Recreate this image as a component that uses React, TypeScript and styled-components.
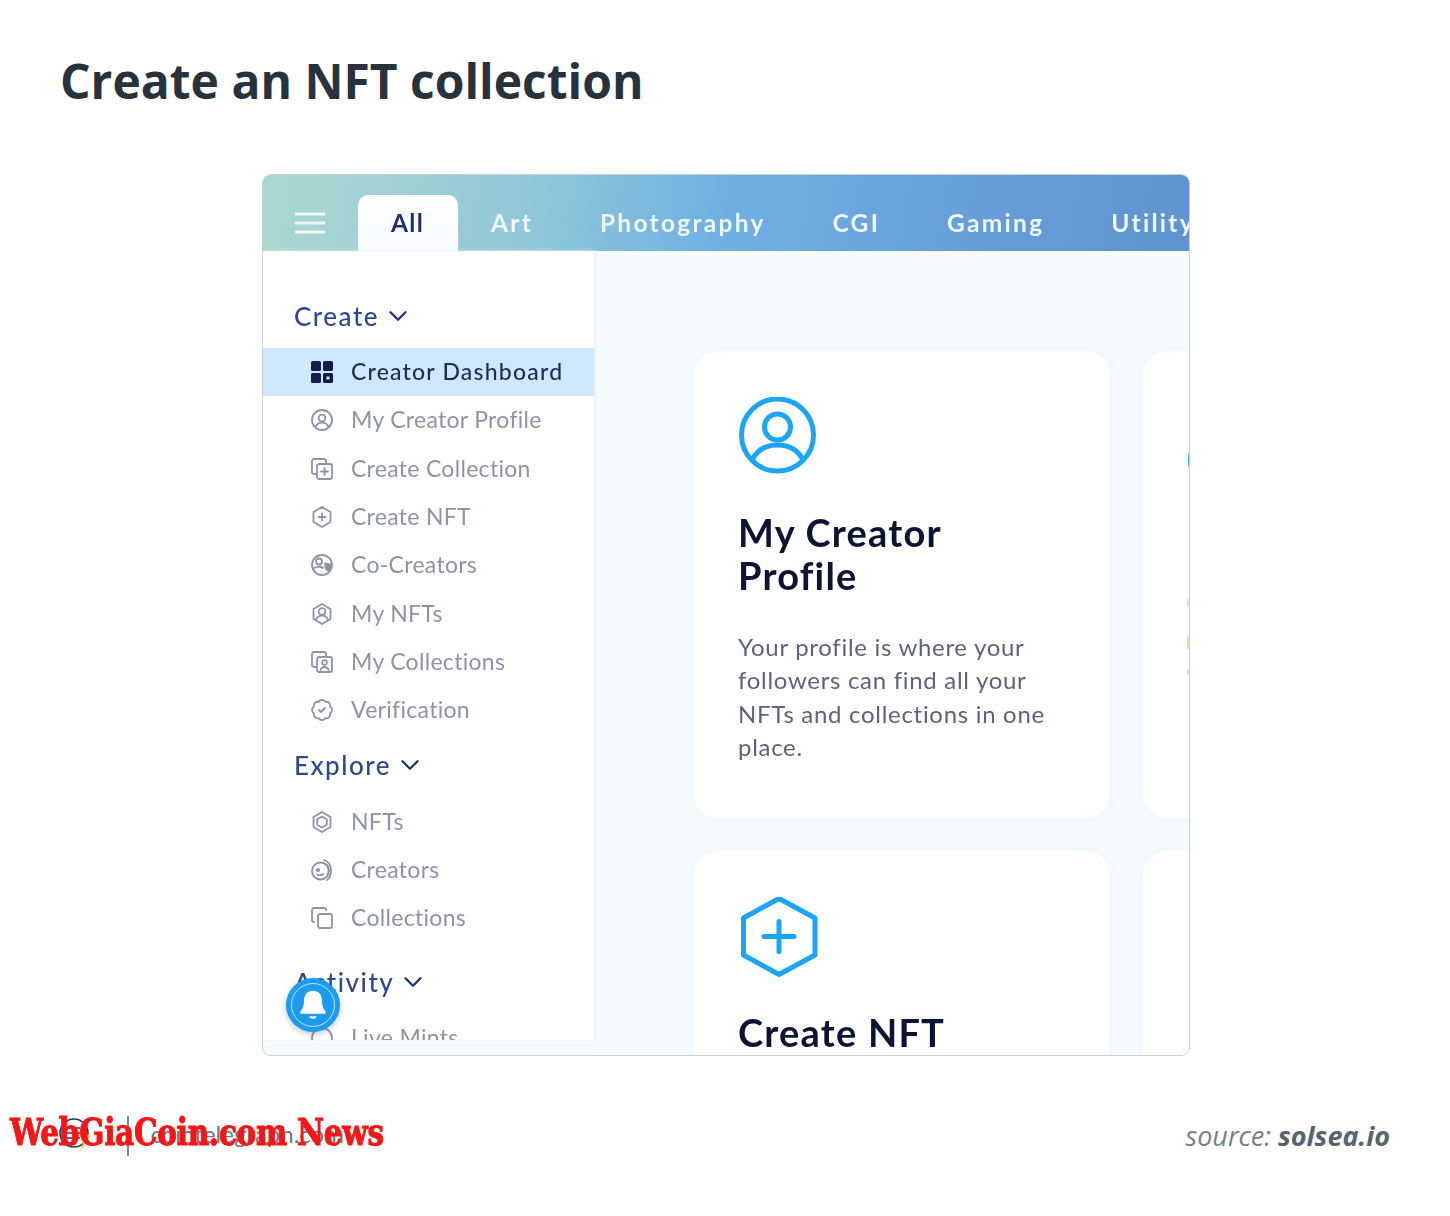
import React from 'react';
import styled, { createGlobalStyle } from 'styled-components';
import { BadgeCheck, ChevronDown, Copy } from 'lucide-react';

const GlobalStyle = createGlobalStyle`
  html, body { margin: 0; padding: 0; background: #fff; }
  * { box-sizing: border-box; }
`;

const Page = styled.div`
  position: relative;
  width: 1450px;
  height: 1216px;
  background: #fff;
  font-family: "Lato", "Open Sans", sans-serif;
  overflow: hidden;
`;

const Title = styled.h1`
  margin: 0;
  padding: 49px 0 0 60px;
  height: 174px;
  font-family: "Open Sans", sans-serif;
  font-size: 48px;
  line-height: 64px;
  font-weight: 700;
  color: #27323d;
`;

const Frame = styled.div`
  width: 928px;
  height: 882px;
  margin-left: 262px;
  border: 1.5px solid #cbcfd2;
  border-radius: 9px;
  overflow: hidden;
  position: relative;
  display: flex;
  flex-direction: column;
  background: #f6fbff;
`;

const Blur = styled.div`
  filter: blur(0.6px);
  display: flex;
  flex-direction: column;
  height: 100%;
`;

const TopBar = styled.div`
  height: 76px;
  flex: none;
  display: flex;
  align-items: flex-end;
  padding-left: 31.5px;
  background: linear-gradient(100deg, #abd8d0 0%, #93c8d8 28%, #6fb0e2 50%, #679fda 75%, #5f93d0 100%);
  white-space: nowrap;
`;

const Burger = styled.svg`
  width: 30px;
  height: 22px;
  margin: 0 33px 17px 0;
  flex: none;
`;

const Tab = styled.div<{ $active?: boolean }>`
  height: 56px;
  flex: none;
  padding: 0 ${({ $active }) => ($active ? 33.5 : 33.4)}px;
  display: flex;
  align-items: center;
  padding-bottom: 2px;
  font-size: 24.5px;
  font-weight: 700;
  letter-spacing: ${({ $active }) => ($active ? 1.3 : 2.3)}px;
  color: ${({ $active }) => ($active ? '#1f2f73' : '#eef7fb')};
  border-radius: 10px 10px 0 0;
  background: ${({ $active }) => ($active ? 'linear-gradient(#fff, #f6fbff)' : 'transparent')};
`;

const Body = styled.div`
  flex: 1;
  display: flex;
  min-height: 0;
`;

const Sidebar = styled.aside`
  width: 331px;
  flex: none;
  background: #fff;
  height: 789px;
  overflow: hidden;
  padding-top: 48px;
  box-shadow: 2px 0 3px #e8f1f9;
`;

const GroupHead = styled.div<{ $gap?: number }>`
  display: flex;
  align-items: center;
  gap: 4px;
  height: 34px;
  padding-left: 31px;
  margin-top: ${({ $gap }) => $gap ?? 0}px;
  margin-bottom: 15px;
  font-size: 26px;
  font-weight: 500;
  letter-spacing: 1.5px;
  color: #30488f;
  svg { color: #22346f; }
`;

const NavItem = styled.div<{ $active?: boolean }>`
  height: 48.3px;
  display: flex;
  align-items: center;
  gap: 17px;
  padding-left: 47px;
  font-size: 23px;
  letter-spacing: ${({ $active }) => ($active ? 1.2 : 0.3)}px;
  font-weight: ${({ $active }) => ($active ? 500 : 400)};
  color: ${({ $active }) => ($active ? '#1d2c55' : '#8e93a6')};
  background: ${({ $active }) => ($active ? '#cfe8fd' : 'transparent')};
  svg { flex: none; width: 24px; height: 24px; }
`;

const NavLabel = styled.span`
  margin-bottom: 2px;
`;

const Main = styled.main`
  flex: 1;
  min-width: 0;
  overflow: hidden;
  display: grid;
  grid-template-columns: 416px 416px;
  grid-auto-rows: 467px;
  gap: 33px;
  padding: 100px 0 0 100px;
`;

const Card = styled.section`
  position: relative;
  width: 416px;
  height: 467px;
  padding: 46px 44px 0;
  background: #fff;
  border-radius: 24px;
  box-shadow: 0 0 10px #eef6fd;
`;

const CardIcon = styled.svg<{ $drop?: number }>`
  display: block;
  width: 80px;
  height: 80px;
  margin-top: ${({ $drop }) => $drop ?? 0}px;
  color: #1ca4f5;
`;

const CardTitle = styled.h2`
  margin: 34px 0 0;
  width: 300px;
  font-size: 38px;
  line-height: 43px;
  font-weight: 700;
  letter-spacing: 1.2px;
  color: #0c1434;
`;

const CardText = styled.p`
  margin: 33px 0 0;
  font-size: 24px;
  line-height: 33.4px;
  letter-spacing: 0.7px;
  color: #5d6479;
`;

const TanDot = styled.span<{ $top: number; $h: number }>`
  position: absolute;
  left: 44px;
  top: ${({ $top }) => $top}px;
  width: 3px;
  height: ${({ $h }) => $h}px;
  border-radius: 2px;
  background: #ecdcb8;
`;

const BellButton = styled.div`
  position: absolute;
  left: 23px;
  top: 803px;
  width: 54px;
  height: 54px;
  border-radius: 50%;
  background: #1b9cf0;
  box-shadow: 0 2px 6px rgba(60, 90, 120, 0.35);
  display: flex;
  align-items: center;
  justify-content: center;
  &::after {
    content: "";
    position: absolute;
    inset: 5px;
    border: 1.5px solid #bfe4fb;
    border-radius: 50%;
  }
  svg { width: 36px; height: 36px; }
`;

const BottomFade = styled.div`
  position: absolute;
  left: 0;
  bottom: 0;
  width: 331px;
  height: 14px;
  background: #f6f9fd;
`;

const Footer = styled.footer`
  display: flex;
  align-items: center;
  justify-content: space-between;
  height: 40px;
  margin-top: 60px;
  padding: 0 60px 0 58px;
`;

const Brand = styled.div`
  display: flex;
  align-items: center;
  height: 40px;
  font-size: 24px;
  color: #6c7a86;
`;

const BrandIcon = styled.svg`
  width: 36px;
  height: 40px;
  flex: none;
`;

const Divider = styled.span`
  width: 1.5px;
  height: 40px;
  margin: 0 22px 0 33px;
  background: #7c8790;
`;

const BrandName = styled.span`
  margin-bottom: 6px;
`;

const Source = styled.div`
  font-family: "Open Sans", sans-serif;
  font-style: italic;
  font-size: 27px;
  color: #76808a;
  margin-bottom: 2px;
  b { font-weight: 700; color: #566470; }
`;

const Watermark = styled.div`
  position: absolute;
  left: 10px;
  top: 1109px;
  font-family: "DejaVu Serif Condensed", "DejaVu Serif", serif;
  font-size: 38px;
  line-height: 46px;
  font-weight: 900;
  color: #f71616;
  letter-spacing: -0.3px;
  white-space: nowrap;
  transform: scaleX(0.864);
  transform-origin: left center;
  -webkit-text-stroke: 1px #f71616;
`;

const Ico = ({ children }: { children: React.ReactNode }) => (
  <svg viewBox="0 0 24 24" fill="none" stroke="#8e93a6" strokeWidth="1.8" strokeLinecap="round" strokeLinejoin="round">
    {children}
  </svg>
);

const hex = 'M12 2 L20.500 7 V17 L12 22 L3.500 17 V7 Z';

const navCreate: { label: string; icon: React.ReactNode }[] = [
  {
    label: 'My Creator Profile',
    icon: (
      <Ico>
        <circle cx="12" cy="12" r="10" />
        <circle cx="12" cy="10" r="3.400" />
        <path d="M5.500 18.500c1.500-2.600 3.800-3.800 6.500-3.800s5 1.200 6.500 3.800" />
      </Ico>
    ),
  },
  {
    label: 'Create Collection',
    icon: (
      <Ico>
        <path d="M6 17H4a2 2 0 0 1-2-2V4a2 2 0 0 1 2-2h10a2 2 0 0 1 2 2v2" />
        <rect x="7" y="7" width="15" height="15" rx="2" />
        <path d="M14.500 11v7M11 14.500h7" />
      </Ico>
    ),
  },
  {
    label: 'Create NFT',
    icon: (
      <Ico>
        <path d={hex} />
        <path d="M12 8.500v7M8.500 12h7" />
      </Ico>
    ),
  },
  {
    label: 'Co-Creators',
    icon: (
      <Ico>
        <circle cx="12" cy="12" r="10" />
        <circle cx="9" cy="8.500" r="3" />
        <path d="M3 16c2-2.500 7-3 10-1" />
        <path d="M15 10.500l6.500 1.500-3 6-2.500-2z" fill="#8e93a6" />
      </Ico>
    ),
  },
  {
    label: 'My NFTs',
    icon: (
      <Ico>
        <path d={hex} />
        <circle cx="12" cy="9.500" r="3.400" />
        <path d="M6 18c1-3 3.200-4.300 6-4.300s5 1.300 6 4.300" />
      </Ico>
    ),
  },
  {
    label: 'My Collections',
    icon: (
      <Ico>
        <path d="M6 17H4a2 2 0 0 1-2-2V4a2 2 0 0 1 2-2h10a2 2 0 0 1 2 2v2" />
        <rect x="7" y="7" width="15" height="15" rx="2" />
        <circle cx="14.500" cy="12.500" r="2.400" />
        <path d="M10.500 20c.6-2 2-3 4-3s3.400 1 4 3" />
      </Ico>
    ),
  },
  { label: 'Verification', icon: <BadgeCheck color="#8e93a6" strokeWidth={1.8} /> },
];

const navExplore: { label: string; icon: React.ReactNode }[] = [
  {
    label: 'NFTs',
    icon: (
      <Ico>
        <path d={hex} />
        <path d="M12 6.500 L16.800 9.200 V14.800 L12 17.500 L7.200 14.800 V9.200 Z" />
      </Ico>
    ),
  },
  {
    label: 'Creators',
    icon: (
      <Ico>
        <circle cx="10.500" cy="13" r="8.500" />
        <path d="M14 2c4 1 7 5 7 10s-1 8-4 10" />
        <path d="M17 7c2 3 2 7 0 11" />
        <circle cx="8" cy="12" r="1.200" fill="#8e93a6" />
        <path d="M7.500 16.500c2 1.200 4 1 5.500-.5" />
      </Ico>
    ),
  },
  { label: 'Collections', icon: <Copy color="#8e93a6" strokeWidth={1.8} /> },
];

export default function App() {
  return (
    <Page>
      <GlobalStyle />
      <Title>Create an NFT collection</Title>
      <Frame>
        <Blur>
          <TopBar>
            <Burger viewBox="0 0 30 22">
              <path d="M1 2h28M1 11h28M1 20h28" stroke="#eef7f8" strokeWidth="3.200" strokeLinecap="round" />
            </Burger>
            <Tab $active>All</Tab>
            <Tab>Art</Tab>
            <Tab>Photography</Tab>
            <Tab>CGI</Tab>
            <Tab>Gaming</Tab>
            <Tab>Utility</Tab>
          </TopBar>
          <Body>
            <Sidebar>
              <GroupHead>
                Create <ChevronDown size={30} strokeWidth={1.900} />
              </GroupHead>
              <NavItem $active>
                <svg viewBox="0 0 24 24" fill="#131d48">
                  <rect x="1" y="1" width="10" height="10" rx="1.500" />
                  <rect x="13" y="1" width="10" height="10" rx="1.500" />
                  <rect x="1" y="13" width="10" height="10" rx="1.500" />
                  <path
                    fillRule="evenodd"
                    d="M14.500 13h7a1.500 1.500 0 0 1 1.500 1.500v7a1.500 1.500 0 0 1-1.500 1.500h-7a1.500 1.500 0 0 1-1.500-1.500v-7a1.500 1.500 0 0 1 1.500-1.500zM16.500 16.500v3h3v-3z"
                  />
                </svg>
                <NavLabel>Creator Dashboard</NavLabel>
              </NavItem>
              {navCreate.map((item) => (
                <NavItem key={item.label}>
                  {item.icon}
                  <NavLabel>{item.label}</NavLabel>
                </NavItem>
              ))}
              <GroupHead $gap={14}>
                Explore <ChevronDown size={30} strokeWidth={1.900} />
              </GroupHead>
              {navExplore.map((item) => (
                <NavItem key={item.label}>
                  {item.icon}
                  <NavLabel>{item.label}</NavLabel>
                </NavItem>
              ))}
              <GroupHead $gap={23}>
                Activity <ChevronDown size={30} strokeWidth={1.900} />
              </GroupHead>
              <NavItem>
                <Ico>
                  <circle cx="12" cy="12" r="10" />
                </Ico>
                <NavLabel>Live Mints</NavLabel>
              </NavItem>
            </Sidebar>
            <Main>
              <Card>
                <CardIcon viewBox="0 0 80 80" fill="none" stroke="currentColor" strokeWidth="5">
                  <circle cx="39.500" cy="38" r="36" />
                  <circle cx="39.500" cy="30" r="13" />
                  <path d="M14 63c5-10 14-15 25.500-15S60 53 65 63" />
                </CardIcon>
                <CardTitle>My Creator Profile</CardTitle>
                <CardText>
                  Your profile is where your followers can find all your NFTs and collections in one place.
                </CardText>
              </Card>
              <Card>
                <CardIcon $drop={25} viewBox="0 0 80 80" fill="none" stroke="currentColor" strokeWidth="5">
                  <circle cx="39.500" cy="38" r="36" />
                </CardIcon>
                <TanDot $top={248} $h={8} />
                <TanDot $top={284} $h={14} />
                <TanDot $top={318} $h={6} />
              </Card>
              <Card>
                <CardIcon viewBox="0 0 80 80" fill="none" stroke="currentColor" strokeWidth="5">
                  <path d="M41 1.500 L77 21 V58 L41 77.500 L5.500 58 V21 Z" strokeLinejoin="round" />
                  <path d="M41 24.500v30M26 39.500h30" strokeLinecap="round" />
                </CardIcon>
                <CardTitle>Create NFT</CardTitle>
              </Card>
              <Card />
            </Main>
          </Body>
          <BottomFade />
          <BellButton>
            <svg viewBox="0 0 24 24" fill="#fff">
              <path d="M12 2.500c-3.800 0-6 2.800-6 6.500 0 4-1 5.500-2.500 7.500-.4.600 0 1.300.7 1.300h15.600c.7 0 1.100-.7.700-1.300C19 14.500 18 13 18 9c0-3.700-2.200-6.500-6-6.500z" />
              <path d="M9.500 19.500h5c-.4 1.200-1.300 1.800-2.500 1.800s-2.100-.6-2.500-1.800z" />
            </svg>
          </BellButton>
        </Blur>
      </Frame>
      <Footer>
        <Brand>
          <BrandIcon viewBox="0 0 36 40" fill="none">
            <circle cx="16" cy="17" r="14" stroke="#2f3b46" strokeWidth="1.600" />
            <path d="M9 12h13M9 17h13M9 22h13" stroke="#2f3b46" strokeWidth="1.400" />
            <path d="M30 7l-9 14h6l-5 15 11-17h-6z" fill="#f7c948" />
          </BrandIcon>
          <Divider />
          <BrandName>cointelegraph.com</BrandName>
        </Brand>
        <Source>
          source: <b>solsea.io</b>
        </Source>
      </Footer>
      <Watermark>WebGiaCoin.com News</Watermark>
    </Page>
  );
}
